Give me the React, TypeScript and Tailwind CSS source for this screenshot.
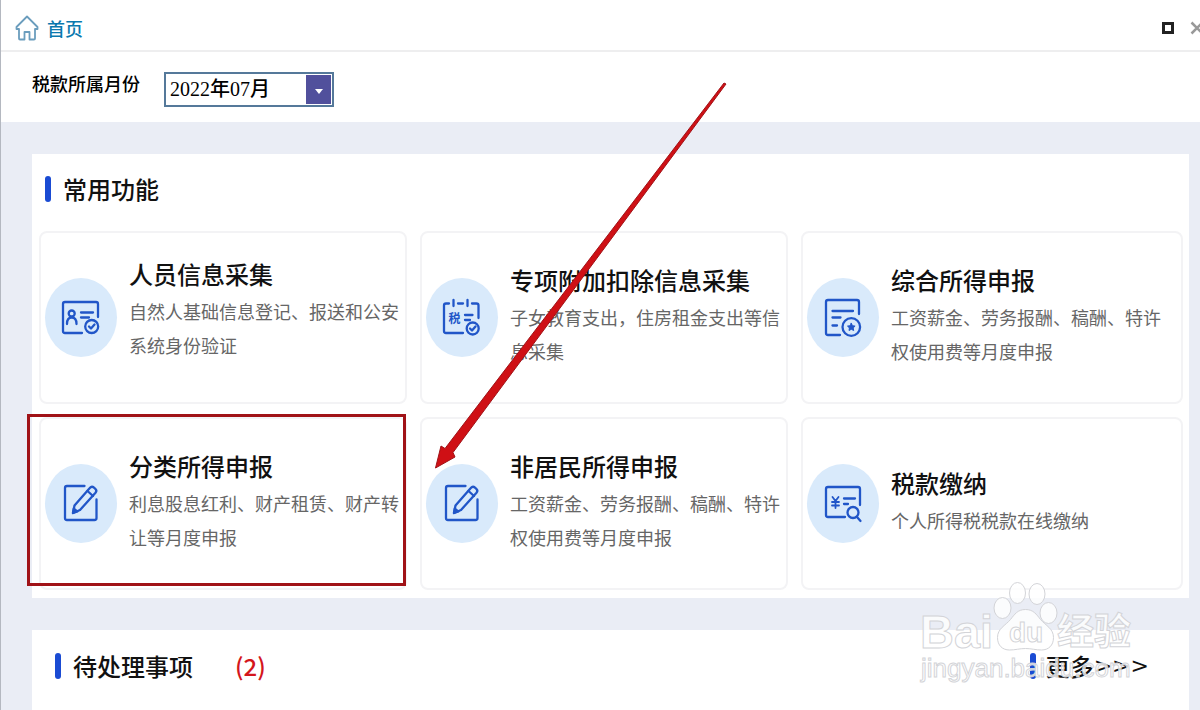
import { useState } from "react";
import type { ReactNode } from "react";

type Feature = {
  title: string;
  des: string;
  icon: ReactNode;
  raised?: boolean;
  marked?: boolean;
};

const CardIcon = ({ children }: { children: ReactNode }) => (
  <svg
    viewBox="0 0 72 79"
    className="h-[79px] w-[72px] shrink-0 rounded-[50%] bg-[#d9eafb]"
    fill="none"
    stroke="#2156c8"
    strokeWidth="2.3"
    strokeLinecap="round"
    strokeLinejoin="round"
    aria-hidden="true"
  >
    {children}
  </svg>
);

const PersonIcon = () => (
  <CardIcon>
    <path d="M53 39V26a2 2 0 0 0-2-2H20a2 2 0 0 0-2 2v27a2 2 0 0 0 2 2h17" />
    <circle cx="26.7" cy="35.5" r="3" />
    <path d="M22 46c0-4 1.500-6.500 4.700-6.500S31.500 42 31.500 46M36 34.500h12M36 39.500h8" />
    <circle cx="46.700" cy="48.500" r="6.500" />
    <path d="m44 48.500 2 2 3.500-4" />
  </CardIcon>
);

const CalendarIcon = () => (
  <CardIcon>
    <path d="M23 25.500h-3a2 2 0 0 0-2 2V53a2 2 0 0 0 2 2h17M32 25.500h5M46 25.500h4.500a2 2 0 0 1 2 2V40M27.500 22v6M41.500 22v6" />
    <path d="M39 37h7.500M39 42h5" />
    <circle cx="46.700" cy="50.500" r="6" />
    <path d="m44 50.500 2 2 3.500-4" />
    <text
      x="28.500"
      y="44.500"
      textAnchor="middle"
      stroke="none"
      fill="#2156c8"
      className="font-['Noto_Sans_CJK_SC',sans-serif] text-[12px] font-bold"
    >
      税
    </text>
  </CardIcon>
);

const FormStarIcon = () => (
  <CardIcon>
    <path d="M52 36V24a2 2 0 0 0-2-2H21a2 2 0 0 0-2 2v31a2 2 0 0 0 2 2h12" />
    <path d="M25.500 33H46M25.500 39.500h8M25.500 47.500h4.500" />
    <circle cx="44.300" cy="49" r="8.800" />
    <path
      d="m44.300 45.300 1.200 2.400 2.600.4-1.900 1.800.5 2.600-2.400-1.200-2.300 1.200.4-2.600-1.900-1.800 2.600-.4z"
      fill="#2156c8"
      strokeWidth="1"
    />
  </CardIcon>
);

const PencilIcon = () => (
  <CardIcon>
    <path d="M39.500 22H22a2 2 0 0 0-2 2v30a2 2 0 0 0 2 2h27.500a2 2 0 0 0 2-2V35.500" />
    <path d="m28 49 1.500-7.500L44.800 24a3 3 0 0 1 4.200-.4l1.100 1a3 3 0 0 1 .4 4.200L35 46z" />
    <path d="m42.500 27 5.500 5" />
    <path d="m28 49 .8-4.500 3.500 3z" fill="#2156c8" />
  </CardIcon>
);

const PaymentIcon = () => (
  <CardIcon>
    <path d="M53 41V25a2 2 0 0 0-2-2H21a2 2 0 0 0-2 2v26a2 2 0 0 0 2 2h17" />
    <path d="m25.500 33 3 4 3-4M28.500 37v7M25 38h7M25 41.500h7" strokeWidth="1.8" />
    <path d="M37 34.500h11M37 40h4" />
    <circle cx="46" cy="48.500" r="5.500" />
    <path d="m50 53 3.500 4" />
  </CardIcon>
);

const features: Feature[] = [
  {
    title: "人员信息采集",
    des: "自然人基础信息登记、报送和公安系统身份验证",
    icon: <PersonIcon />,
    raised: true,
  },
  {
    title: "专项附加扣除信息采集",
    des: "子女教育支出，住房租金支出等信息采集",
    icon: <CalendarIcon />,
  },
  {
    title: "综合所得申报",
    des: "工资薪金、劳务报酬、稿酬、特许权使用费等月度申报",
    icon: <FormStarIcon />,
  },
  {
    title: "分类所得申报",
    des: "利息股息红利、财产租赁、财产转让等月度申报",
    icon: <PencilIcon />,
    marked: true,
  },
  {
    title: "非居民所得申报",
    des: "工资薪金、劳务报酬、稿酬、特许权使用费等月度申报",
    icon: <PencilIcon />,
  },
  {
    title: "税款缴纳",
    des: "个人所得税税款在线缴纳",
    icon: <PaymentIcon />,
  },
];

function FeatureCard({ item }: { item: Feature }) {
  return (
    <button
      type="button"
      className="relative flex items-center gap-3 rounded-lg border-2 border-[#f3f3f5] bg-white pr-1 pl-1 text-left"
    >
      {item.icon}
      <span className={item.raised ? "block min-w-0 flex-1 pb-5" : "block min-w-0 flex-1 pb-2"}>
        <span className="block text-2xl leading-10 font-medium text-[#111]">{item.title}</span>
        <span className="block text-lg leading-[34px] text-[#666]">{item.des}</span>
      </span>
      {item.marked && (
        <span className="pointer-events-none absolute -top-[5px] -right-px bottom-0.5 -left-3.5 border-3 border-[#a01217]" />
      )}
    </button>
  );
}

const Bar = () => <span className="h-[26px] w-1.5 rounded-full bg-[#1a4bd3]" />;

function Watermark() {
  return (
    <svg
      viewBox="0 0 220 110"
      className="pointer-events-none absolute right-[61px] bottom-[20px] h-[110px] w-[220px]"
      fill="#fff"
      fillOpacity="0.8"
      stroke="#d3d4d8"
      strokeWidth="1"
      aria-hidden="true"
    >
      <ellipse cx="98.500" cy="13" rx="8" ry="10.500" />
      <ellipse cx="118" cy="14" rx="8" ry="10.500" />
      <ellipse cx="83.500" cy="28" rx="8.500" ry="10.500" />
      <ellipse cx="129.500" cy="33" rx="8.500" ry="10.500" />
      <path d="M106.500 29.500c8 0 11 5 15 10 5 6 13 9 13 18 0 8-5 12.500-12 12.500-6 0-10-1.500-16-1.500s-10 1.500-16 1.500c-7 0-12-4.500-12-12.500 0-9 8-12 13-18 4-5 7-10 15-10z" />
      <g className="font-['Liberation_Sans','Noto_Sans_CJK_SC',sans-serif]">
        <text x="1" y="68" className="text-[47px] font-bold">Bai</text>
        <text x="90" y="62" className="text-[28px] font-bold">du</text>
        <text x="138" y="65" className="text-[37px] font-bold">经验</text>
        <text x="2" y="97" className="text-[26px]">jingyan.baidu.com</text>
      </g>
    </svg>
  );
}

export default function App() {
  const [month, setMonth] = useState("2022-07");

  return (
    <div className="relative flex min-h-screen flex-col overflow-hidden border-l border-[#b4b8c0] bg-[#eaedf5] font-['Noto_Sans_CJK_SC',sans-serif] text-[#111]">
      <header className="flex h-[52px] items-center border-b-2 border-[#eeeeef] bg-white pt-1.5 pl-3.5">
        <svg viewBox="0 0 24 26" className="h-[26px] w-6" fill="none" stroke="#6b9dbd" strokeWidth="1.8" strokeLinejoin="round" aria-hidden="true">
          <path d="M12 1.500 1.500 12v2H4v9.500a1 1 0 0 0 1 1h4.500V17h5v7.500H19a1 1 0 0 0 1-1V14h2.500v-2z" />
        </svg>
        <h1 className="ml-2 flex-1 text-lg font-medium text-[#0a78ae]">首页</h1>
        <button type="button" aria-label="最大化" className="size-3 border-3 border-[#222]" />
        <button type="button" aria-label="关闭" className="-mr-1 ml-4">
          <svg viewBox="0 0 14 14" className="size-3.5" stroke="#999" strokeWidth="2.500" aria-hidden="true">
            <path d="m1.500 1.500 11 11M12.500 1.500l-11 11" />
          </svg>
        </button>
      </header>

      <div className="flex h-[70px] items-center bg-white pt-1 pl-[31px]">
        <label htmlFor="month" className="pb-3 text-lg font-medium text-black">税款所属月份</label>
        <div className="relative ml-6">
          <select
            id="month"
            value={month}
            onChange={(e) => setMonth(e.target.value)}
            className="h-[35px] w-[170px] appearance-none border-2 border-[#55799a] bg-white pl-1 font-['Liberation_Serif','Noto_Sans_CJK_SC',serif] text-xl font-medium text-black"
          >
            <option value="2022-07">2022年07月</option>
            <option value="2022-06">2022年06月</option>
          </select>
          <span className="pointer-events-none absolute inset-y-[3px] right-[3px] flex w-[25px] items-center justify-center bg-[#51509c]">
            <svg viewBox="0 0 8 5" className="mt-1 h-[5px] w-2" fill="#fff" aria-hidden="true">
              <path d="M0 0h8L4 5z" />
            </svg>
          </span>
        </div>
      </div>

      <main className="flex flex-1 flex-col gap-8 pt-8 pr-[11px] pl-[31px]">
        <section className="bg-white pr-1.5 pb-2 pl-[7px]">
          <div className="flex h-[77px] items-center gap-3 pb-2 pl-1.5">
            <Bar />
            <h2 className="text-2xl font-medium">常用功能</h2>
          </div>
          <div className="grid auto-rows-[173px] grid-cols-[368fr_368fr_382fr] gap-[13px]">
            {features.map((item) => (
              <FeatureCard key={item.title} item={item} />
            ))}
          </div>
        </section>

        <section className="flex flex-1 items-start bg-white pt-5 pr-10 pl-[23px]">
          <div className="flex items-center gap-3">
            <Bar />
            <h2 className="text-2xl font-medium">待处理事项</h2>
            <span className="ml-[30px] text-2xl font-medium text-[#d4161c]">(2)</span>
          </div>
          <a href="#todo" className="ml-auto flex items-center text-2xl font-medium">
            <Bar />
            <span className="ml-2.5">更多</span>
            <span className="font-['DejaVu_Sans',sans-serif] text-[22px]">&gt;&gt;&gt;</span>
          </a>
        </section>
      </main>

      {/* Pointer to the highlighted card */}
      <svg viewBox="0 0 300 390" className="pointer-events-none absolute top-[81px] left-[431px] h-[390px] w-[300px]" aria-hidden="true">
        <path
          d="M3.500 387 9 365l4 2.500L292 2l2 1L21 371.500l2 4.500z"
          fill="#cf1015"
          stroke="#a01217"
          strokeWidth="1"
        />
      </svg>
      <Watermark />
    </div>
  );
}
